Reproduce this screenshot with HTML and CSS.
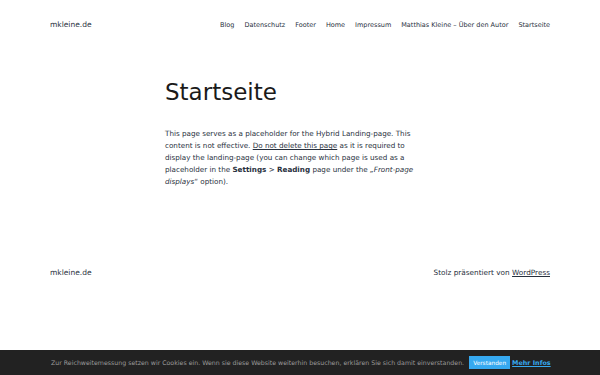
FILE: index.html
```html
<!DOCTYPE html>
<html lang="de">
<head>
  <meta charset="UTF-8" />
  <meta name="viewport" content="width=device-width, initial-scale=1.0"/>
  <title>Startseite – mkleine.de</title>
  <link rel="stylesheet" href="styles.css">
</head>
<body>

  <header class="site-header">
    <a class="site-title" href="#">mkleine.de</a>
    <nav class="main-nav">
      <a href="#">Blog</a>
      <a href="#">Datenschutz</a>
      <a href="#">Footer</a>
      <a href="#">Home</a>
      <a href="#">Impressum</a>
      <a href="#">Matthias Kleine – Über den Autor</a>
      <a href="#">Startseite</a>
    </nav>
  </header>

  <main class="content">
    <h1>Startseite</h1>
    <p>This page serves as a placeholder for the Hybrid Landing-page. This content is not effective. <u>Do not delete this page</u> as it is required to display the landing-page (you can change which page is used as a placeholder in the <strong>Settings</strong> &gt; <strong>Reading</strong> page under the <em>„Front-page displays</em>“ option).</p>
  </main>

  <footer class="site-footer">
    <a class="site-title" href="#">mkleine.de</a>
    <div class="powered">Stolz präsentiert von <a href="#">WordPress</a></div>
  </footer>

  <!-- Cookie notice -->
  <div class="cookie-bar">
    <span>Zur Reichweitemessung setzen wir Cookies ein. Wenn sie diese Website weiterhin besuchen, erklären Sie sich damit einverstanden.</span>
    <button class="cookie-btn">Verstanden</button>
    <a class="cookie-more" href="#">Mehr Infos</a>
  </div>

</body>
</html>
```

FILE: styles.css
```css
* { margin: 0; padding: 0; box-sizing: border-box; font-family: 'DejaVu Sans', sans-serif; }
body { background-color: #ffffff; color: #28303d; width: 600px; height: 375px; overflow: hidden; position: relative; }
a { color: #28303d; text-decoration: none; }
.site-header {
  display: flex;
  justify-content: space-between;
  align-items: center;
  padding: 19px 50px 0;
  height: 30px;
}
.site-title { font-size: 7.5px; }
.main-nav { display: flex; gap: 10px; font-size: 6.5px; }
.content { width: 256px; margin: 49px 0 0 165px; }
.content h1 { font-size: 23px; font-weight: normal; color: #1a1a1a; margin-bottom: 23px; }
.content p { font-size: 7.2px; line-height: 12px; color: #28303d; }
.content u { text-decoration: underline; }
.site-footer {
  display: flex;
  justify-content: space-between;
  align-items: center;
  padding: 0 50px;
  margin-top: 80px;
}
.site-footer .site-title { font-size: 7.5px; }
.powered { font-size: 7.3px; }
.powered a { text-decoration: underline; }
.cookie-bar {
  position: absolute;
  left: 0;
  right: 0;
  bottom: 0;
  height: 25px;
  background-color: #222222;
  color: #9a9a9a;
  font-size: 6.25px;
  display: flex;
  align-items: center;
  padding-left: 51px;
}
.cookie-btn {
  background-color: #36a9f0;
  color: #ffffff;
  border: none;
  font-size: 5.8px;
  width: 41px;
  height: 13px;
  margin-left: 5px;
  margin-right: 2px;
}
.cookie-more { color: #36a9f0; font-weight: bold; text-decoration: underline; font-size: 6.4px; }
```
